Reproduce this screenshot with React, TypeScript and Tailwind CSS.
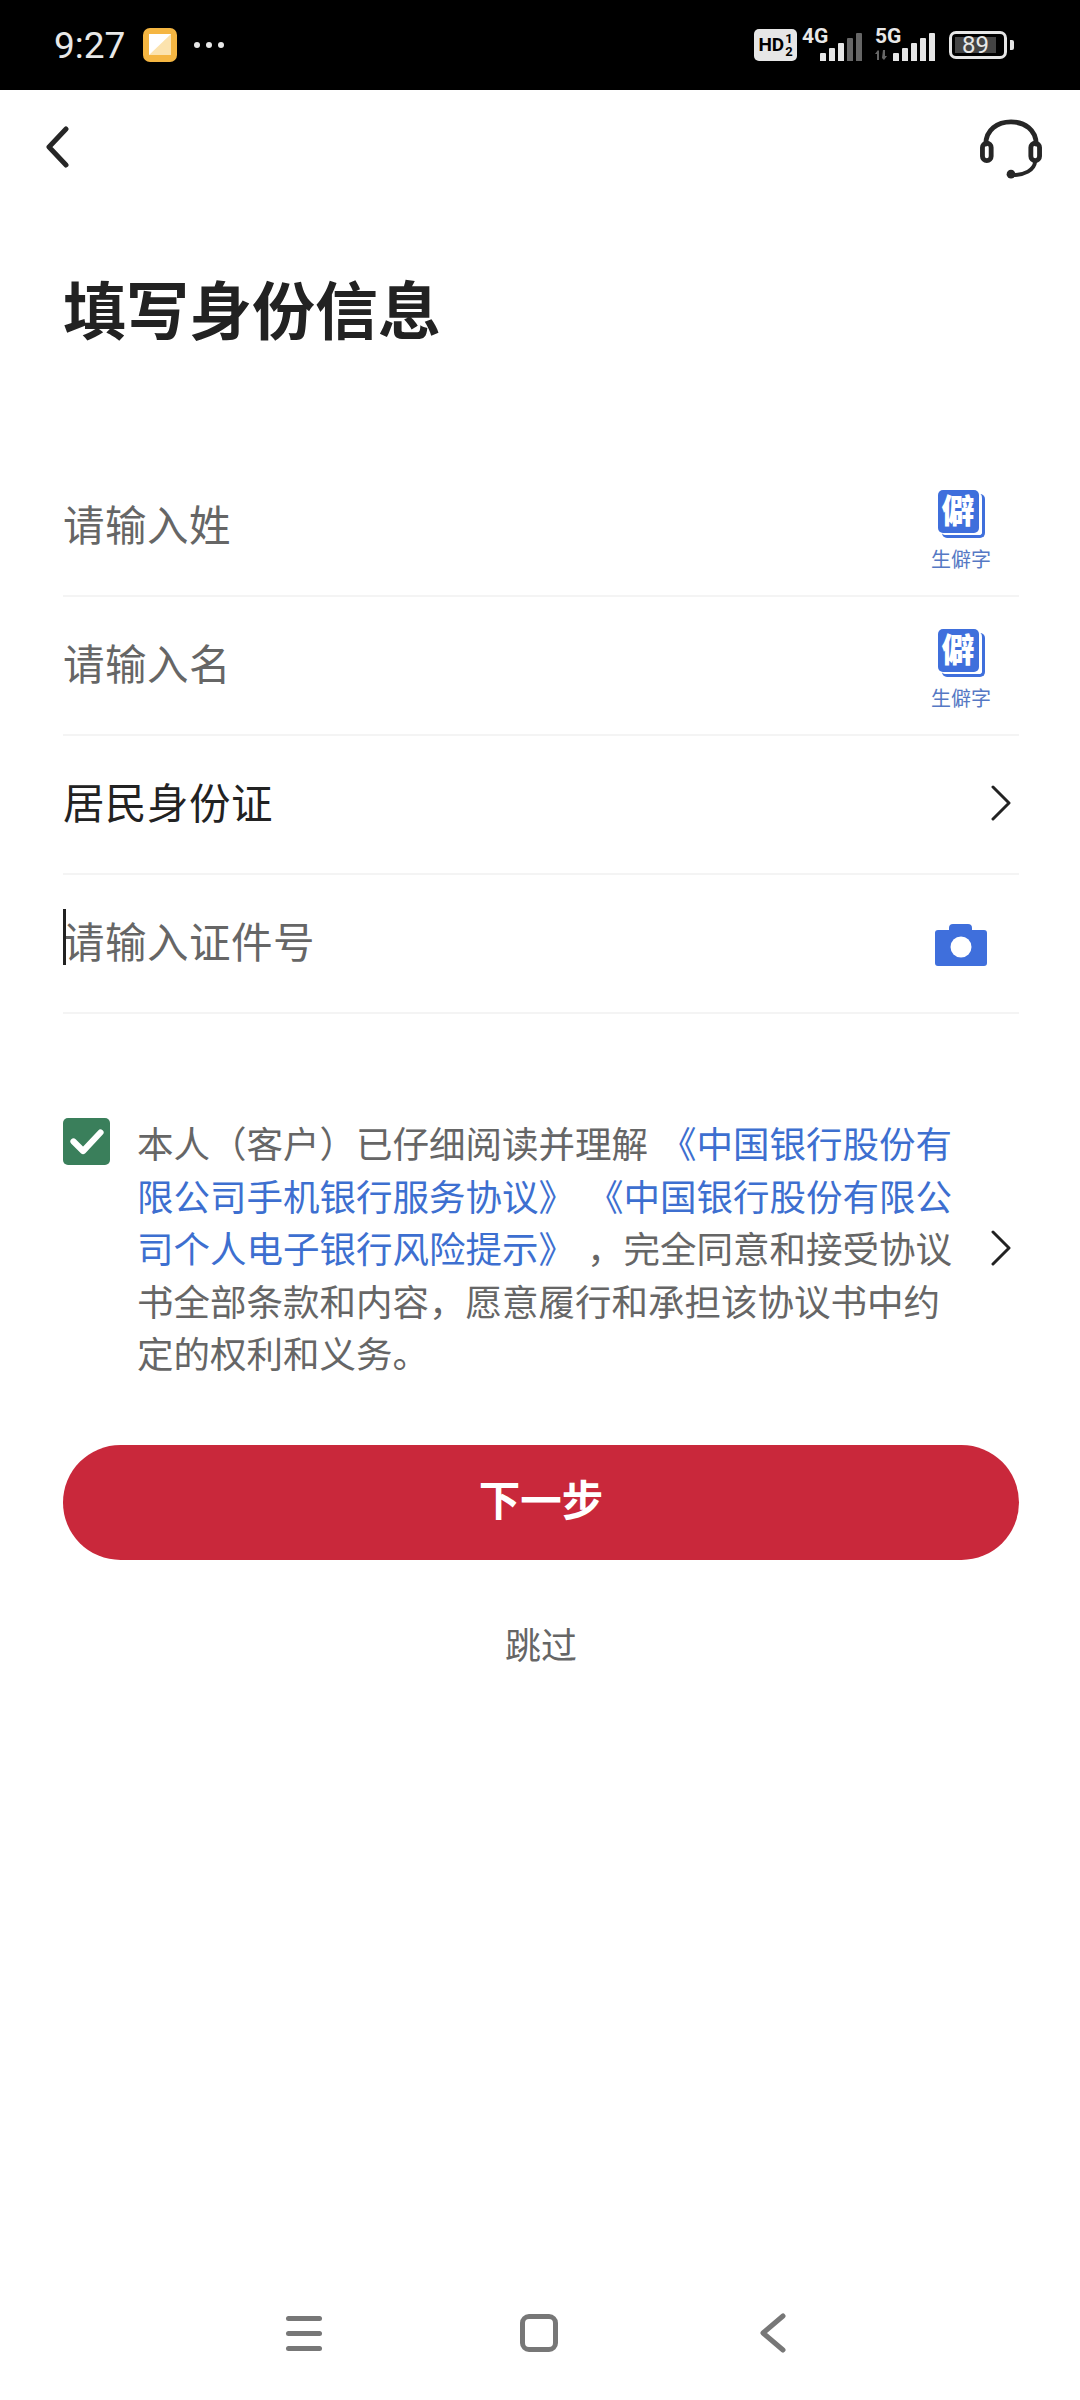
const cjk = "font-['Roboto','Noto_Sans_CJK_SC',sans-serif]";

function SignalBars({ dim = 0 }: { dim?: number }) {
  const heights = [8, 13, 18, 23, 28];
  return (
    <div className="flex items-end gap-[3px]">
      {heights.map((h, i) => (
        <div
          key={i}
          className={`w-[6px] rounded-t-[1px] ${i >= heights.length - dim ? "bg-[#666]" : "bg-[#e6e6e6]"}`}
          style={{ height: h }}
        />
      ))}
    </div>
  );
}

function StatusBar() {
  return (
    <div className="flex h-[90px] items-center justify-between bg-black pl-[54px] pr-[66px] text-[#e8e8e8]">
      <div className="flex items-center">
        <span className="text-[37px] font-['Roboto',sans-serif] leading-none">9:27</span>
        <svg width="34" height="34" viewBox="0 0 34 34" className="ml-[18px]">
          <rect width="34" height="34" rx="7" fill="#f5b642" />
          <rect x="6" y="6" width="22" height="21" fill="#fce3ae" />
          <path d="M6 6h22L6 27z" fill="#fff" />
        </svg>
        <div className="ml-[17px] flex gap-[6px]">
          <div className="h-[6px] w-[6px] rounded-full bg-[#e8e8e8]" />
          <div className="h-[6px] w-[6px] rounded-full bg-[#e8e8e8]" />
          <div className="h-[6px] w-[6px] rounded-full bg-[#e8e8e8]" />
        </div>
      </div>
      <div className="flex items-center font-['Roboto',sans-serif]">
        <div className="flex h-[32px] w-[43px] items-center justify-center rounded-[5px] bg-[#e6e6e6] text-[19px] font-bold text-black">
          HD
          <span className="ml-[1px] flex flex-col text-[13px] leading-[13px]">
            <span>1</span>
            <span>2</span>
          </span>
        </div>
        <div className="relative ml-[5px] flex h-[32px] w-[60px] items-end justify-end">
          <span className="absolute left-0 top-[-3px] text-[21px] font-bold leading-none">4G</span>
          <SignalBars dim={2} />
        </div>
        <div className="relative ml-[13px] flex h-[32px] w-[60px] items-end justify-end">
          <span className="absolute left-0 top-[-3px] text-[21px] font-bold leading-none">5G</span>
          <svg width="12" height="10" viewBox="0 0 12 10" fill="#666" className="absolute bottom-[1px] left-0">
            <path d="M2 10V4H0l3-4 1 1v9zM8 0h2v6h2l-3 4-2-2z" />
          </svg>
          <SignalBars />
        </div>
        <div className="ml-[14px] flex h-[28px] w-[58px] items-center rounded-[7px] border-[3px] border-[#e6e6e6] p-[3px]">
          <div className="flex h-full w-[41px] items-center justify-center bg-[#444] text-[24px] leading-none">89</div>
        </div>
        <div className="ml-[3px] h-[10px] w-[4px] rounded-r-[2px] bg-[#e6e6e6]" />
      </div>
    </div>
  );
}

function ChevronRight() {
  return (
    <svg width="20" height="36" viewBox="0 0 20 36" fill="none" stroke="#222" strokeWidth="3" strokeLinecap="round" strokeLinejoin="round">
      <path d="M2 2l16 16-16 16" />
    </svg>
  );
}

function RareCharButton() {
  return (
    <div className="mr-[27px] mt-[6px] flex w-[62px] flex-col items-center">
      <div className="relative h-[48px] w-[47px]">
        <div className="absolute right-0 bottom-0 h-[44px] w-[43px] rounded-[5px] border-r-[3px] border-b-[3px] border-[#3f6fdc]" />
        <div className="absolute left-0 top-0 flex h-[43px] w-[41px] items-center justify-center rounded-[5px] bg-[#3f6fdc] text-[33px] font-black leading-none text-white">
          僻
        </div>
      </div>
      <span className="mt-[12px] whitespace-nowrap text-[20px] leading-none text-[#5578c4]">生僻字</span>
    </div>
  );
}

function CameraIcon() {
  return (
    <svg width="54" height="44" viewBox="0 0 54 44">
      <path
        d="M15 7V5a4 4 0 0 1 4-4h15a4 4 0 0 1 4 4v2h12a3 3 0 0 1 3 3v30a3 3 0 0 1-3 3H4a3 3 0 0 1-3-3V10a3 3 0 0 1 3-3z"
        fill="#3f6fdc"
      />
      <circle cx="27" cy="24" r="10.5" fill="#fff" />
    </svg>
  );
}

function FormRow({ children, right }: { children: React.ReactNode; right?: React.ReactNode }) {
  return (
    <div className="flex h-[139px] items-center justify-between border-b-2 border-[#f4f4f4]">
      <div className="pt-[2px] text-[41.500px] tracking-[0.5px] text-[#666]">{children}</div>
      {right}
    </div>
  );
}

export default function App() {
  return (
    <div className={`flex h-[2400px] w-[1080px] flex-col bg-white ${cjk}`}>
      <StatusBar />

      <div className="flex h-[114px] items-center justify-between pl-[46px] pr-[37px]">
        <svg width="24" height="42" viewBox="0 0 24 42" fill="none" stroke="#262626" strokeWidth="5" strokeLinecap="round" strokeLinejoin="round">
          <path d="M20 3L3 21l17 18" />
        </svg>
        <svg width="64" height="60" viewBox="0 0 66 62" fill="none" stroke="#262626" strokeLinecap="round" className="mt-[3px]">
          <path d="M7 26C7 11 19 3 33 3s26 8 26 23" strokeWidth="5" />
          <rect x="3.5" y="25" width="9" height="18" rx="4.5" strokeWidth="5" />
          <rect x="53.500" y="25" width="9" height="18" rx="4.5" strokeWidth="5" />
          <path d="M58 44c-1 9-11 14-24 14" strokeWidth="4" />
          <circle cx="33" cy="57" r="4.500" fill="#262626" stroke="none" />
        </svg>
      </div>

      <div className="pl-[63px] pr-[61px]">
        <h1 className="mt-[69px] text-[63px] font-bold leading-[80px] text-[#222]">填写身份信息</h1>

        <div className="mt-[105px]">
          <FormRow right={<RareCharButton />}>请输入姓</FormRow>
          <FormRow right={<RareCharButton />}>请输入名</FormRow>
          <FormRow right={<div className="mr-[8px] mb-[4px]"><ChevronRight /></div>}>
            <span className="text-[#222]">居民身份证</span>
          </FormRow>
          <FormRow right={<div className="mr-[31px] mt-[2px]"><CameraIcon /></div>}>
            <div className="relative">
              <div className="absolute left-0 top-[-4px] h-[56px] w-[3px] bg-[#222]" />
              请输入证件号
            </div>
          </FormRow>
        </div>

        <div className="mt-[104px] flex items-start">
          <div className="flex h-[47px] w-[47px] shrink-0 items-center justify-center rounded-[5px] bg-[#3a7f5b]">
            <svg width="34" height="27" viewBox="0 0 30 24" fill="none" stroke="#fff" strokeWidth="5.500" strokeLinecap="round" strokeLinejoin="round">
              <path d="M3 12l8.500 8.500L27 4" />
            </svg>
          </div>
          <p className="ml-[27px] mt-[2px] w-[818px] text-[36.500px] leading-[52.500px] text-[#666] [text-spacing-trim:space-all] [word-spacing:3px]">
            本人（客户）已仔细阅读并理解{" "}
            <span className="text-[#3d6fd0]">《中国银行股份有限公司手机银行服务协议》 《中国银行股份有限公司个人电子银行风险提示》</span>{" "}
            ，完全同意和接受协议书全部条款和内容，愿意履行和承担该协议书中约定的权利和义务。
          </p>
          <div className="ml-[36px] mt-[112px]">
            <ChevronRight />
          </div>
        </div>

        <div className="mt-[62px] flex h-[115px] items-center justify-center rounded-full bg-[#c9283b] text-[41.500px] font-bold text-white">
          下一步
        </div>
        <div className="mt-[62px] text-center text-[36px] leading-[50px] text-[#666]">跳过</div>
      </div>

      <div className="mt-auto mb-[47px] flex items-center pl-[286px]">
        <div className="flex w-[36px] flex-col gap-[10px]">
          <div className="h-[5px] rounded-full bg-[#777]" />
          <div className="h-[5px] rounded-full bg-[#777]" />
          <div className="h-[5px] rounded-full bg-[#777]" />
        </div>
        <div className="ml-[198px] h-[38px] w-[38px] rounded-[9px] border-[5px] border-[#777]" />
        <svg width="26" height="40" viewBox="0 0 26 40" fill="none" stroke="#777" strokeWidth="5" strokeLinecap="round" strokeLinejoin="round" className="ml-[202px]">
          <path d="M23 3L3 20l20 17" />
        </svg>
      </div>
    </div>
  );
}
